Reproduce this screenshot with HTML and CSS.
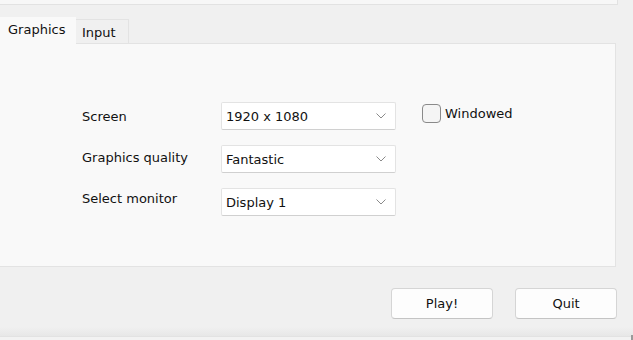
FILE: index.html
```html
<!DOCTYPE html>
<html>
<head>
<meta charset="utf-8">
<link rel="stylesheet" href="styles.css">
</head>
<body>
<div class="window">
  <div class="topbox"></div>
  <div class="tabstrip">
    <div class="tab active">Graphics</div>
    <div class="tab">Input</div>
  </div>
  <div class="pane">
    <div class="labels">
      <div class="label">Screen</div>
      <div class="label">Graphics quality</div>
      <div class="label">Select monitor</div>
    </div>
    <div class="selects">
      <div class="select"><span>1920 x 1080</span><svg class="chev" width="10" height="6" viewBox="0 0 10 6"><path d="M0.5 0.5 L5 5 L9.5 0.5" fill="none" stroke="#8a8a8a" stroke-width="1"/></svg></div>
      <div class="select"><span>Fantastic</span><svg class="chev" width="10" height="6" viewBox="0 0 10 6"><path d="M0.5 0.5 L5 5 L9.5 0.5" fill="none" stroke="#8a8a8a" stroke-width="1"/></svg></div>
      <div class="select"><span>Display 1</span><svg class="chev" width="10" height="6" viewBox="0 0 10 6"><path d="M0.5 0.5 L5 5 L9.5 0.5" fill="none" stroke="#8a8a8a" stroke-width="1"/></svg></div>
    </div>
    <label class="check"><span class="box"></span>Windowed</label>
  </div>
  <div class="footer">
    <button class="btn">Play!</button>
    <button class="btn">Quit</button>
  </div>
  <div class="statusline"><span class="grip"></span></div>
</div>
</body>
</html>
```
FILE: styles.css
```css
html, body {
  margin: 0;
  padding: 0;
  background: #f0f0f0;
}
.window {
  width: 633px;
  height: 340px;
  overflow: hidden;
  font-family: "DejaVu Sans", sans-serif;
  font-size: 13px;
  color: #111;
  display: flex;
  flex-direction: column;
}
.topbox {
  flex: none;
  width: 617px;
  height: 4px;
  background: #f7f7f7;
  border-bottom: 1px solid #e2e2e2;
  border-right: 1px solid #e2e2e2;
  box-sizing: content-box;
}
.tabstrip {
  flex: none;
  display: flex;
  align-items: flex-end;
  margin-top: 12px;
  height: 26px;
  position: relative;
  z-index: 1;
}
.tab {
  box-sizing: border-box;
  height: 24px;
  width: 53px;
  padding: 5px 0 0 6px;
  background: #f0f0f0;
  border: 1px solid #e3e3e3;
  border-bottom: none;
  border-left: none;
}
.tab.active {
  width: 76px;
  height: 27px;
  margin-bottom: -1px;
  background: #f9f9f9;
  padding: 5px 0 0 8px;
  border: none;
}
.pane {
  flex: none;
  box-sizing: border-box;
  width: 616px;
  height: 224px;
  background: #f9f9f9;
  border: 1px solid #e3e3e3;
  border-left: none;
  padding: 58px 0 0 82px;
  display: flex;
  align-items: flex-start;
}
.labels {
  width: 139px;
  display: flex;
  flex-direction: column;
  gap: 25px;
  padding-top: 7px;
}
.label {
  line-height: 16px;
}
.selects {
  width: 175px;
  display: flex;
  flex-direction: column;
  gap: 15px;
}
.select {
  box-sizing: border-box;
  height: 28px;
  background: #fff;
  border: 1px solid #e3e3e3;
  border-bottom-color: #d0d0d0;
  border-radius: 2px;
  display: flex;
  align-items: center;
  justify-content: space-between;
  padding: 0 9px 0 4px;
}
.chev {
  display: block;
}
.check {
  display: flex;
  align-items: center;
  margin-top: 2px;
  margin-left: 26px;
}
.box {
  box-sizing: border-box;
  width: 19px;
  height: 19px;
  border: 1px solid #8a8a8a;
  border-radius: 4px;
  background: #f5f5f5;
  margin-right: 4px;
}
.footer {
  flex: 1;
  display: flex;
  justify-content: flex-end;
  align-items: flex-start;
  gap: 22px;
  padding: 21px 16px 0 0;
  box-sizing: border-box;
  background: linear-gradient(#f0f0f0 60px, #e7e7e7);
}
.btn {
  box-sizing: border-box;
  width: 102px;
  height: 31px;
  background: #fdfdfd;
  border: 1px solid #d5d5d5;
  border-bottom-color: #c4c4c4;
  border-radius: 4px;
  font: inherit;
  color: #111;
  padding: 0;
}
.statusline {
  flex: none;
  height: 3px;
  background: #f2f2f2;
  border-top: 1px solid #e2e2e2;
  position: relative;
}
.grip {
  position: absolute;
  right: 0;
  bottom: 0;
  width: 2px;
  height: 5px;
  background: #9a9a9a;
}
```
